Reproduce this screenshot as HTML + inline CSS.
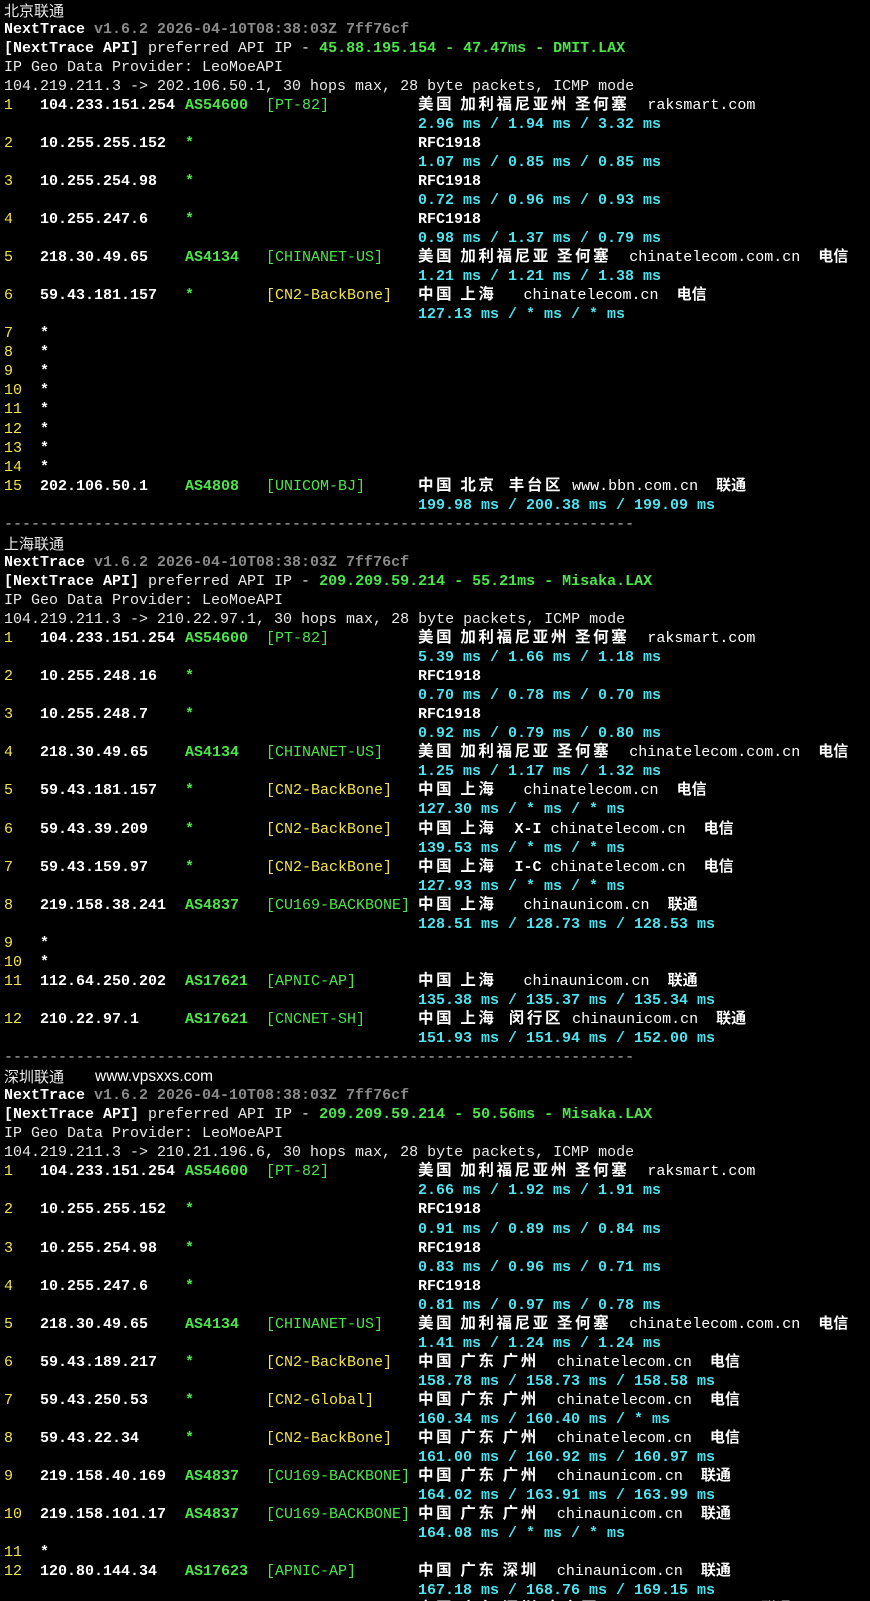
<!DOCTYPE html>
<html><head><meta charset="utf-8"><style>
html,body{margin:0;padding:0;background:#000;width:870px;height:1600px;overflow:hidden}
body{font-family:"Liberation Mono","Noto Sans CJK SC",monospace;font-size:15px;color:#e8e8e8;padding-top:0.5px}
.l{position:relative;height:19.05px;line-height:19.05px;white-space:pre}
.l span{position:absolute;top:0;white-space:pre;line-height:19px}
.f{left:4px}
.n{left:4px;color:#f2e34c}
.i{left:40px;color:#fff;font-weight:bold}
.a{left:185px;color:#4ee44e;font-weight:bold}
.t{left:266px;color:#4ee44e}
.y{left:266px;color:#f2e34c}
.g{left:418px;color:#fff}
.ms{left:418px;color:#4fe2ef;font-weight:bold}
.c{font-family:"Noto Sans CJK SC",sans-serif;font-size:15.5px;letter-spacing:2.6px;font-weight:bold;line-height:1}
.cn{font-family:"Noto Sans CJK SC",sans-serif;font-size:15px;line-height:1}
.gr{color:#8a8a8a;font-weight:bold}
.gn{color:#4ee44e;font-weight:bold}
.w{color:#fff;font-weight:bold}
.l span b,.l span i{position:static;font-style:normal}
.d{color:#bbb}
</style></head><body>
<div class="l"><span class="f cn">北京联通</span></div>
<div class="l"><span class="f"><i class="w">NextTrace</i><i class="gr"> v1.6.2 2026-04-10T08:38:03Z 7ff76cf</i></span></div>
<div class="l"><span class="f"><i class="w">[NextTrace API]</i> preferred API IP - <i class="gn">45.88.195.154 - 47.47ms - DMIT.LAX</i></span></div>
<div class="l"><span class="f">IP Geo Data Provider: LeoMoeAPI</span></div>
<div class="l"><span class="f">104.219.211.3 -> 202.106.50.1, 30 hops max, 28 byte packets, ICMP mode</span></div>
<div class="l"><span class="n">1</span><span class="i">104.233.151.254</span><span class="a">AS54600</span><span class="t">[PT-82]</span><span class="g"><b class="c">美国 加利福尼亚州 圣何塞</b>  raksmart.com</span></div>
<div class="l"><span class="ms">2.96 ms / 1.94 ms / 3.32 ms</span></div>
<div class="l"><span class="n">2</span><span class="i">10.255.255.152</span><span class="a">*</span><span class="g"><b class="w">RFC1918</b></span></div>
<div class="l"><span class="ms">1.07 ms / 0.85 ms / 0.85 ms</span></div>
<div class="l"><span class="n">3</span><span class="i">10.255.254.98</span><span class="a">*</span><span class="g"><b class="w">RFC1918</b></span></div>
<div class="l"><span class="ms">0.72 ms / 0.96 ms / 0.93 ms</span></div>
<div class="l"><span class="n">4</span><span class="i">10.255.247.6</span><span class="a">*</span><span class="g"><b class="w">RFC1918</b></span></div>
<div class="l"><span class="ms">0.98 ms / 1.37 ms / 0.79 ms</span></div>
<div class="l"><span class="n">5</span><span class="i">218.30.49.65</span><span class="a">AS4134</span><span class="t">[CHINANET-US]</span><span class="g"><b class="c">美国 加利福尼亚 圣何塞</b>  chinatelecom.com.cn  <b class="cn">电信</b></span></div>
<div class="l"><span class="ms">1.21 ms / 1.21 ms / 1.38 ms</span></div>
<div class="l"><span class="n">6</span><span class="i">59.43.181.157</span><span class="a">*</span><span class="y">[CN2-BackBone]</span><span class="g"><b class="c">中国 上海</b>   chinatelecom.cn  <b class="cn">电信</b></span></div>
<div class="l"><span class="ms">127.13 ms / * ms / * ms</span></div>
<div class="l"><span class="n">7</span><span class="i">*</span></div>
<div class="l"><span class="n">8</span><span class="i">*</span></div>
<div class="l"><span class="n">9</span><span class="i">*</span></div>
<div class="l"><span class="n">10</span><span class="i">*</span></div>
<div class="l"><span class="n">11</span><span class="i">*</span></div>
<div class="l"><span class="n">12</span><span class="i">*</span></div>
<div class="l"><span class="n">13</span><span class="i">*</span></div>
<div class="l"><span class="n">14</span><span class="i">*</span></div>
<div class="l"><span class="n">15</span><span class="i">202.106.50.1</span><span class="a">AS4808</span><span class="t">[UNICOM-BJ]</span><span class="g"><b class="c">中国 北京  丰台区</b> www.bbn.com.cn  <b class="cn">联通</b></span></div>
<div class="l"><span class="ms">199.98 ms / 200.38 ms / 199.09 ms</span></div>
<div class="l"><span class="f d">----------------------------------------------------------------------</span></div>
<div class="l"><span class="f cn">上海联通</span></div>
<div class="l"><span class="f"><i class="w">NextTrace</i><i class="gr"> v1.6.2 2026-04-10T08:38:03Z 7ff76cf</i></span></div>
<div class="l"><span class="f"><i class="w">[NextTrace API]</i> preferred API IP - <i class="gn">209.209.59.214 - 55.21ms - Misaka.LAX</i></span></div>
<div class="l"><span class="f">IP Geo Data Provider: LeoMoeAPI</span></div>
<div class="l"><span class="f">104.219.211.3 -> 210.22.97.1, 30 hops max, 28 byte packets, ICMP mode</span></div>
<div class="l"><span class="n">1</span><span class="i">104.233.151.254</span><span class="a">AS54600</span><span class="t">[PT-82]</span><span class="g"><b class="c">美国 加利福尼亚州 圣何塞</b>  raksmart.com</span></div>
<div class="l"><span class="ms">5.39 ms / 1.66 ms / 1.18 ms</span></div>
<div class="l"><span class="n">2</span><span class="i">10.255.248.16</span><span class="a">*</span><span class="g"><b class="w">RFC1918</b></span></div>
<div class="l"><span class="ms">0.70 ms / 0.78 ms / 0.70 ms</span></div>
<div class="l"><span class="n">3</span><span class="i">10.255.248.7</span><span class="a">*</span><span class="g"><b class="w">RFC1918</b></span></div>
<div class="l"><span class="ms">0.92 ms / 0.79 ms / 0.80 ms</span></div>
<div class="l"><span class="n">4</span><span class="i">218.30.49.65</span><span class="a">AS4134</span><span class="t">[CHINANET-US]</span><span class="g"><b class="c">美国 加利福尼亚 圣何塞</b>  chinatelecom.com.cn  <b class="cn">电信</b></span></div>
<div class="l"><span class="ms">1.25 ms / 1.17 ms / 1.32 ms</span></div>
<div class="l"><span class="n">5</span><span class="i">59.43.181.157</span><span class="a">*</span><span class="y">[CN2-BackBone]</span><span class="g"><b class="c">中国 上海</b>   chinatelecom.cn  <b class="cn">电信</b></span></div>
<div class="l"><span class="ms">127.30 ms / * ms / * ms</span></div>
<div class="l"><span class="n">6</span><span class="i">59.43.39.209</span><span class="a">*</span><span class="y">[CN2-BackBone]</span><span class="g"><b class="c">中国 上海</b>  <b class="w">X-I</b> chinatelecom.cn  <b class="cn">电信</b></span></div>
<div class="l"><span class="ms">139.53 ms / * ms / * ms</span></div>
<div class="l"><span class="n">7</span><span class="i">59.43.159.97</span><span class="a">*</span><span class="y">[CN2-BackBone]</span><span class="g"><b class="c">中国 上海</b>  <b class="w">I-C</b> chinatelecom.cn  <b class="cn">电信</b></span></div>
<div class="l"><span class="ms">127.93 ms / * ms / * ms</span></div>
<div class="l"><span class="n">8</span><span class="i">219.158.38.241</span><span class="a">AS4837</span><span class="t">[CU169-BACKBONE]</span><span class="g"><b class="c">中国 上海</b>   chinaunicom.cn  <b class="cn">联通</b></span></div>
<div class="l"><span class="ms">128.51 ms / 128.73 ms / 128.53 ms</span></div>
<div class="l"><span class="n">9</span><span class="i">*</span></div>
<div class="l"><span class="n">10</span><span class="i">*</span></div>
<div class="l"><span class="n">11</span><span class="i">112.64.250.202</span><span class="a">AS17621</span><span class="t">[APNIC-AP]</span><span class="g"><b class="c">中国 上海</b>   chinaunicom.cn  <b class="cn">联通</b></span></div>
<div class="l"><span class="ms">135.38 ms / 135.37 ms / 135.34 ms</span></div>
<div class="l"><span class="n">12</span><span class="i">210.22.97.1</span><span class="a">AS17621</span><span class="t">[CNCNET-SH]</span><span class="g"><b class="c">中国 上海  闵行区</b> chinaunicom.cn  <b class="cn">联通</b></span></div>
<div class="l"><span class="ms">151.93 ms / 151.94 ms / 152.00 ms</span></div>
<div class="l"><span class="f d">----------------------------------------------------------------------</span></div>
<div class="l"><span class="f cn">深圳联通</span><span style="left:95px;font-family:'Liberation Sans',sans-serif;font-size:15.5px;color:#fff">www.vpsxxs.com</span></div>
<div class="l"><span class="f"><i class="w">NextTrace</i><i class="gr"> v1.6.2 2026-04-10T08:38:03Z 7ff76cf</i></span></div>
<div class="l"><span class="f"><i class="w">[NextTrace API]</i> preferred API IP - <i class="gn">209.209.59.214 - 50.56ms - Misaka.LAX</i></span></div>
<div class="l"><span class="f">IP Geo Data Provider: LeoMoeAPI</span></div>
<div class="l"><span class="f">104.219.211.3 -> 210.21.196.6, 30 hops max, 28 byte packets, ICMP mode</span></div>
<div class="l"><span class="n">1</span><span class="i">104.233.151.254</span><span class="a">AS54600</span><span class="t">[PT-82]</span><span class="g"><b class="c">美国 加利福尼亚州 圣何塞</b>  raksmart.com</span></div>
<div class="l"><span class="ms">2.66 ms / 1.92 ms / 1.91 ms</span></div>
<div class="l"><span class="n">2</span><span class="i">10.255.255.152</span><span class="a">*</span><span class="g"><b class="w">RFC1918</b></span></div>
<div class="l"><span class="ms">0.91 ms / 0.89 ms / 0.84 ms</span></div>
<div class="l"><span class="n">3</span><span class="i">10.255.254.98</span><span class="a">*</span><span class="g"><b class="w">RFC1918</b></span></div>
<div class="l"><span class="ms">0.83 ms / 0.96 ms / 0.71 ms</span></div>
<div class="l"><span class="n">4</span><span class="i">10.255.247.6</span><span class="a">*</span><span class="g"><b class="w">RFC1918</b></span></div>
<div class="l"><span class="ms">0.81 ms / 0.97 ms / 0.78 ms</span></div>
<div class="l"><span class="n">5</span><span class="i">218.30.49.65</span><span class="a">AS4134</span><span class="t">[CHINANET-US]</span><span class="g"><b class="c">美国 加利福尼亚 圣何塞</b>  chinatelecom.com.cn  <b class="cn">电信</b></span></div>
<div class="l"><span class="ms">1.41 ms / 1.24 ms / 1.24 ms</span></div>
<div class="l"><span class="n">6</span><span class="i">59.43.189.217</span><span class="a">*</span><span class="y">[CN2-BackBone]</span><span class="g"><b class="c">中国 广东 广州</b>  chinatelecom.cn  <b class="cn">电信</b></span></div>
<div class="l"><span class="ms">158.78 ms / 158.73 ms / 158.58 ms</span></div>
<div class="l"><span class="n">7</span><span class="i">59.43.250.53</span><span class="a">*</span><span class="y">[CN2-Global]</span><span class="g"><b class="c">中国 广东 广州</b>  chinatelecom.cn  <b class="cn">电信</b></span></div>
<div class="l"><span class="ms">160.34 ms / 160.40 ms / * ms</span></div>
<div class="l"><span class="n">8</span><span class="i">59.43.22.34</span><span class="a">*</span><span class="y">[CN2-BackBone]</span><span class="g"><b class="c">中国 广东 广州</b>  chinatelecom.cn  <b class="cn">电信</b></span></div>
<div class="l"><span class="ms">161.00 ms / 160.92 ms / 160.97 ms</span></div>
<div class="l"><span class="n">9</span><span class="i">219.158.40.169</span><span class="a">AS4837</span><span class="t">[CU169-BACKBONE]</span><span class="g"><b class="c">中国 广东 广州</b>  chinaunicom.cn  <b class="cn">联通</b></span></div>
<div class="l"><span class="ms">164.02 ms / 163.91 ms / 163.99 ms</span></div>
<div class="l"><span class="n">10</span><span class="i">219.158.101.17</span><span class="a">AS4837</span><span class="t">[CU169-BACKBONE]</span><span class="g"><b class="c">中国 广东 广州</b>  chinaunicom.cn  <b class="cn">联通</b></span></div>
<div class="l"><span class="ms">164.08 ms / * ms / * ms</span></div>
<div class="l"><span class="n">11</span><span class="i">*</span></div>
<div class="l"><span class="n">12</span><span class="i">120.80.144.34</span><span class="a">AS17623</span><span class="t">[APNIC-AP]</span><span class="g"><b class="c">中国 广东 深圳</b>  chinaunicom.cn  <b class="cn">联通</b></span></div>
<div class="l"><span class="ms">167.18 ms / 168.76 ms / 169.15 ms</span></div>
<div class="l"><span class="g"><b class="c">中国 广东 深圳 宝安区</b>  chinaunicom.cn  <b class="cn">联通</b></span></div>
</body></html>
